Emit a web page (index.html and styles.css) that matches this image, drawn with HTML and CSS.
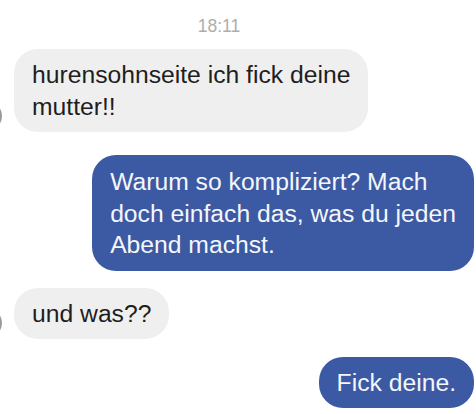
FILE: index.html
```html
<!DOCTYPE html>
<html lang="de">
<head>
<meta charset="utf-8">
<title>Chat</title>
<link rel="stylesheet" href="styles.css">
</head>
<body>
<main class="chat">
  <div class="time">18:11</div>
  <div class="row in first">
    <span class="avatar"></span>
    <div class="bubble grey">hurensohnseite ich fick deine<br>mutter!!</div>
  </div>
  <div class="row out second">
    <div class="bubble blue">Warum so kompliziert? Mach<br>doch einfach das, was du jeden<br>Abend machst.</div>
  </div>
  <div class="row in third">
    <span class="avatar"></span>
    <div class="bubble grey">und was??</div>
  </div>
  <div class="row out fourth">
    <div class="bubble blue">Fick deine.</div>
  </div>
</main>
</body>
</html>
```
FILE: styles.css
```css
* { box-sizing: border-box; }
html, body {
  margin: 0;
  padding: 0;
  background: #ffffff;
}
body {
  width: 476px;
  height: 414px;
  overflow: hidden;
  font-family: "Liberation Sans", Arial, sans-serif;
}
.chat {
  display: flex;
  flex-direction: column;
  padding: 16px 2px 0 0;
}
.time {
  width: 438px;
  text-align: center;
  font-size: 17.5px;
  line-height: 20px;
  height: 20px;
  color: #adadad;
}
.row {
  display: flex;
  align-items: flex-end;
}
.row.in { justify-content: flex-start; }
.row.out { justify-content: flex-end; }
.first { margin-top: 13px; }
.second { margin-top: 23px; }
.third { margin-top: 17px; }
.fourth { margin-top: 17.5px; }
.avatar {
  flex: none;
  width: 30px;
  height: 30px;
  margin-left: -28px;
  margin-right: 12px;
  margin-bottom: 1px;
  border-radius: 50%;
  background: #e2e2e2;
  border: 2px solid #9a9a9a;
}
.bubble {
  flex: none;
  white-space: nowrap;
  padding: 10px 18px;
  font-size: 24.7px;
  line-height: 31.5px;
  border-radius: 24px;
}
.grey {
  background: #f0eff0;
  color: #1e1e1e;
}
.blue {
  background: #3b5aa3;
  color: #f5f6fa;
}
.second .bubble { padding-top: 11px; padding-bottom: 10px; }
```
